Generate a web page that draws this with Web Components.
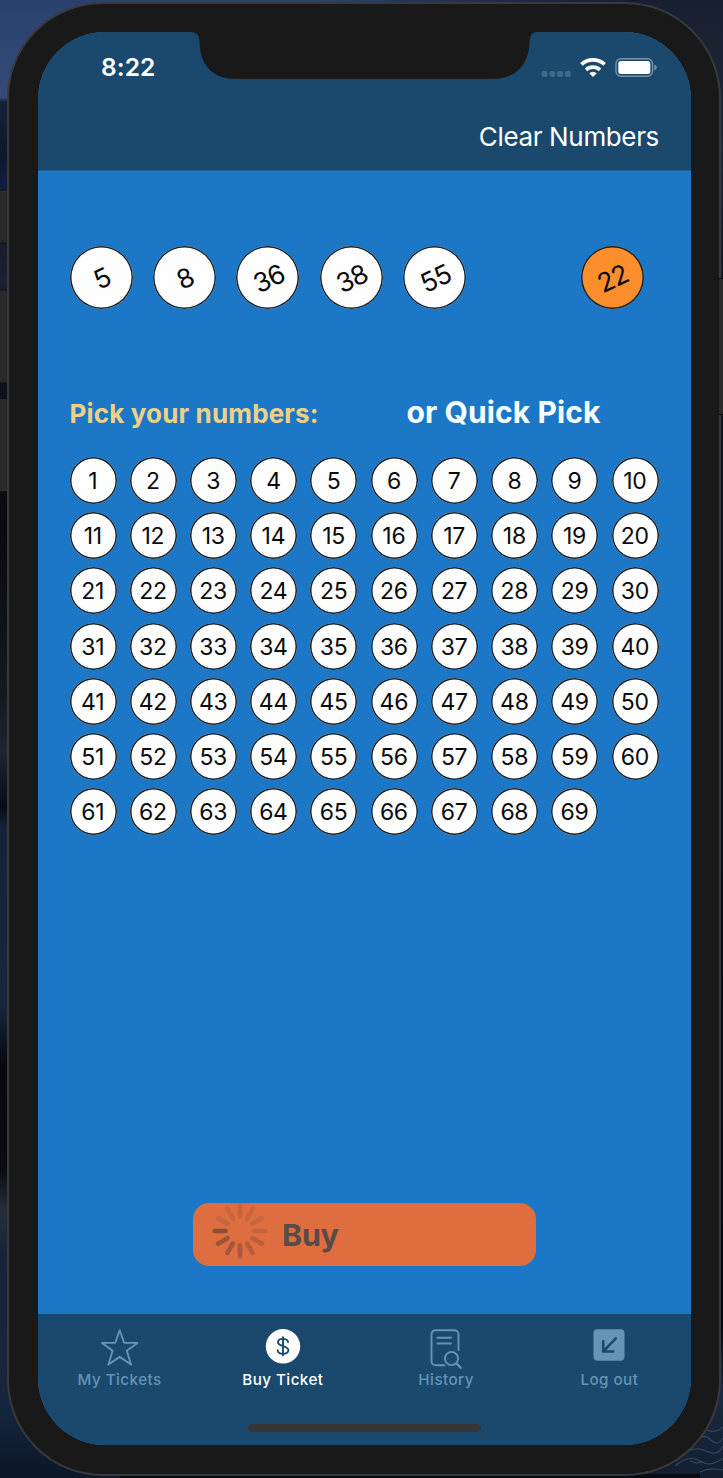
<!DOCTYPE html>
<html lang="en">
<head>
<meta charset="utf-8">
<title>Buy Ticket</title>
<style>
html, body { margin: 0; padding: 0; height: 1478px; overflow: hidden; background: #0b101c; }
body { font-family: Inter, "Liberation Sans", sans-serif; color: #fff; }
</style>
</head>
<body>
<phone-frame>
  <status-header slot="top" time="8:22">Clear Numbers</status-header>
  <ticket-picker slot="main"></ticket-picker>
  <tab-bar slot="bottom">
    <tab-item icon="star">My Tickets</tab-item>
    <tab-item icon="dollar" active>Buy Ticket</tab-item>
    <tab-item icon="history">History</tab-item>
    <tab-item icon="logout">Log out</tab-item>
  </tab-bar>
</phone-frame>
<script>
class BaseElement extends HTMLElement {
  connectedCallback() {
    if (this.shadowRoot) return;
    this.attachShadow({ mode: 'open' }).innerHTML = this.render();
  }
}

customElements.define('phone-frame', class extends BaseElement {
  render() {
    return `
<style>
:host { display: grid; box-sizing: border-box; width: 723px; height: 1478px; padding: 2px 2px 2px 7px; position: relative; overflow: hidden; }
.wall { position: absolute; inset: 0; width: 723px; height: 1478px; }
.case { position: relative; box-sizing: border-box; width: 714px; height: 1474px; border: 2px solid #38393d; border-radius: 96px; background: #191919; padding: 28px 28px 29px 29px; }
.screen { display: grid; grid-template-rows: 139px 1fr 131px; width: 653px; height: 1413px; background: #1c78c6; border-radius: 67px; overflow: hidden; position: relative; }
.notch { position: absolute; left: 153px; top: 0; }
.home { position: absolute; left: 210px; bottom: 13px; width: 233px; height: 8px; border-radius: 4px; background: #363636; }
</style>
<svg class="wall" viewBox="0 0 723 1478" preserveAspectRatio="none">
  <defs>
    <linearGradient id="l" x2="0" y2="1">
      <stop offset="0" stop-color="#2b416d"/><stop offset=".066" stop-color="#344a7a"/><stop offset=".069" stop-color="#17213a"/>
      <stop offset=".1" stop-color="#10182a"/><stop offset=".125" stop-color="#0d1f40"/><stop offset=".16" stop-color="#171a29"/>
      <stop offset=".19" stop-color="#1d2135"/><stop offset=".23" stop-color="#10131d"/><stop offset=".36" stop-color="#090a10"/>
      <stop offset=".47" stop-color="#151a20"/><stop offset=".51" stop-color="#20242e"/><stop offset=".545" stop-color="#0a0c15"/>
      <stop offset=".56" stop-color="#12243b"/><stop offset=".68" stop-color="#14273f"/><stop offset=".72" stop-color="#08090d"/>
      <stop offset=".79" stop-color="#090b10"/><stop offset=".82" stop-color="#292e38"/><stop offset=".85" stop-color="#13243b"/>
      <stop offset=".95" stop-color="#15263e"/><stop offset="1" stop-color="#0c1728"/>
    </linearGradient>
    <linearGradient id="r" x2="0" y2="1">
      <stop offset="0" stop-color="#181f30"/><stop offset=".1" stop-color="#202a39"/><stop offset=".2" stop-color="#14161f"/><stop offset=".5" stop-color="#0c0e14"/>
      <stop offset=".9" stop-color="#080a10"/><stop offset=".94" stop-color="#1b2a41"/><stop offset="1" stop-color="#131e31"/>
    </linearGradient>
    <linearGradient id="t"><stop offset="0" stop-color="#2b416d"/><stop offset=".4" stop-color="#2b416d"/><stop offset="1" stop-color="#181f30"/></linearGradient>
  </defs>
  <path fill="url(#l)" d="M0 0h361v1478H0z"/>
  <path fill="url(#r)" d="M361 0h362v1478H361z"/>
  <path fill="url(#t)" d="M100 0h523v20H100z"/>
  <path fill="#0a0b10" d="M120 1474h580v4H120z"/>
  <path fill="none" stroke="#314663" stroke-width="1.2" d="M682 1455q12-10 24-4t17-5M675 1466q14-12 25-5t23-3M696 1440q8-7 15 0t12-2M700 1472q10-5 23-2M707 1430q8 4 16-3M690 1461q6 3 13 1"/>
  <g fill="#2a2a2b" stroke="#101011">
    <rect x="-3" y="190" width="14" height="53" rx="2"/>
    <rect x="-3" y="290" width="14" height="93" rx="2"/>
    <rect x="-3" y="398.500" width="14" height="93" rx="2"/>
  </g>
</svg>
<div class="case">
  <div class="screen">
    <slot name="top"></slot><slot name="main"></slot><slot name="bottom"></slot>
    <svg class="notch" width="346" height="48" viewBox="153 0 346 48"><path fill="#191919" d="M153-1v1q8 0 8.500 9C161.500 32 174 47 197 47H455C478 47 491.500 32 491.500 9Q492 0 499 0v-1z"/></svg>
    <div class="home"></div>
  </div>
</div>
<svg class="wall" viewBox="0 0 723 1478"><rect x="718" y="278.500" width="14" height="136" rx="2" fill="#2a2a2b" stroke="#101011"/></svg>`;
  }
});

customElements.define('status-header', class extends BaseElement {
  render() {
    return `
<style>
:host { display: flex; flex-direction: column; box-sizing: border-box; background: #1a496d; border-bottom: 1px solid #245f8d; }
.status { display: flex; justify-content: space-between; height: 72px; padding: 0 34px 0 63px; }
time { font-size: 24.5px; line-height: 71px; font-weight: 600; letter-spacing: .1px; }
.action { font-size: 26px; line-height: 65px; text-align: right; padding-right: 32px; letter-spacing: -.35px; }
svg { display: block; }
</style>
<div class="status"><time>${this.getAttribute('time')}</time>
<svg width="116" height="72" viewBox="541 32 116 72">
  <g fill="#3e6a8a"><rect x="541.500" y="71" width="6" height="6" rx="2"/><rect x="549.300" y="71" width="6" height="6" rx="2"/><rect x="557" y="71" width="6" height="6" rx="2"/><rect x="564.800" y="71" width="6" height="6" rx="2"/></g>
  <g fill="none" stroke="#fff" stroke-width="3.700"><path d="M581.400 64.400a17 17 0 0 1 23.200 0"/><path d="M586 69.800a10.500 10.500 0 0 1 14 0"/></g>
  <path fill="#fff" d="M589.300 73.200q3.700-3 7.400 0l-3.700 3.700z"/>
  <rect x="616" y="58.700" width="36.500" height="17.600" rx="5" fill="none" stroke="#7695aa" stroke-width="1.400"/>
  <rect x="618.300" y="61" width="32" height="13" rx="2.800" fill="#fff"/>
  <path fill="#7695aa" d="M654.300 64.500q2.500 1 2.500 3t-2.500 3z"/>
</svg></div>
<div class="action"><slot></slot></div>`;
  }
});

customElements.define('lotto-ball', class extends BaseElement {
  render() {
    return `
<style>
:host { display: grid; place-items: center; width: 47px; height: 47px; box-shadow: inset 0 0 0 1.5px #15232f; border-radius: 50%; background: #fefefe; color: #0b0b0b; font-size: 23px; line-height: 28px; letter-spacing: -.3px; }
:host([drawn]) { width: 63px; height: 63px; font-size: 26.5px; letter-spacing: -.8px; }
:host([power]) { background: #fc8f2c; }
span { position: relative; top: .5px; left: -.3px; }
:host([drawn]) span { transform: rotate(-25deg); left: .5px; }
</style><span><slot></slot></span>`;
  }
});

customElements.define('buy-button', class extends BaseElement {
  render() {
    const alphas = [.12, .12, .12, .15, .2, .25, .3, .34, .4, .5, .14, .12];
    const spokes = alphas.map((a, i) => `<path d="M0-14.500V-25.300" opacity="${a}" transform="rotate(${i * 30})"/>`).join('');
    return `
<style>
:host { display: flex; box-sizing: border-box; width: 343px; height: 63px; padding-left: 18.500px; border-radius: 16px; background: #de6d40; color: #574c46; }
b { font-size: 30.5px; font-weight: 700; line-height: 64px; margin-left: 14.500px; letter-spacing: -.3px; }
</style>
<svg width="56" height="56" viewBox="-28 -28 56 56"><g stroke="#35302d" stroke-width="4.600" stroke-linecap="round">${spokes}</g></svg><b><slot></slot></b>`;
  }
});

customElements.define('ticket-picker', class extends BaseElement {
  render() {
    const grid = Array.from({ length: 69 }, (_, i) => `<lotto-ball>${i + 1}</lotto-ball>`).join('');
    const drawn = [5, 8, 36, 38, 55].map(n => `<lotto-ball drawn>${n}</lotto-ball>`).join('');
    return `
<style>
:host { display: flex; flex-direction: column; box-sizing: border-box; padding: 75px 31.500px 48px 31.500px; }
.drawn { display: flex; gap: 20.400px; padding-right: 16px; }
.drawn :last-child { margin-left: auto; }
.heads { display: flex; align-items: baseline; margin-top: 81px; height: 44px; line-height: 44px; white-space: nowrap; }
.pick { width: 337px; color: #f0d087; font-size: 26px; font-weight: 650; letter-spacing: .16px; }
.quick { font-size: 30px; font-weight: 700; color: #f8ffff; letter-spacing: .1px; }
.grid { display: grid; grid-template-columns: repeat(10, 47px); column-gap: 13.240px; row-gap: 8.200px; margin-top: 23px; }
buy-button { margin: auto auto 0 123.500px; }
</style>
<div class="drawn">${drawn}<lotto-ball drawn power>22</lotto-ball></div>
<div class="heads"><span class="pick">Pick your numbers:</span><span class="quick">or Quick Pick</span></div>
<div class="grid">${grid}</div>
<buy-button>Buy</buy-button>`;
  }
});

customElements.define('tab-bar', class extends BaseElement {
  render() {
    return `
<style>
:host { display: grid; grid-template-columns: repeat(4, 1fr); background: #1a496d; }
</style><slot></slot>`;
  }
});

const ICONS = {
  star: '<path fill="none" stroke="currentColor" stroke-width="1.900" stroke-linejoin="round" d="M19.700 2.300 24.200 14.700 37.400 14.900 26.800 22.800 31 36.500 19.700 28.900 8.400 36.500 12.600 22.800 2 14.900 15.300 14.700z"/>',
  dollar: '<circle cx="20" cy="18.300" r="17.200" fill="#fff"/><g transform="translate(0 .3)" fill="none" stroke="#1a496d" stroke-width="1.900" stroke-linecap="round" stroke-linejoin="round"><path d="M20 8.800V27.200M25 13.800C24.400 9.600 15 9.400 15 14 15 18.800 25.400 16.800 25.400 22 25.400 26.800 15 26.600 14.700 21.900"/></g>',
  history: '<g transform="translate(-.5 .5)" fill="none" stroke="currentColor" stroke-width="1.900" stroke-linecap="round"><path d="M19 36.700H10a4 4 0 0 1-4-4V5.700a4 4 0 0 1 4-4H29a4 4 0 0 1 4 4V21.500M12 9.300H25.500M12 15H25.500"/><circle cx="26" cy="30" r="6.600"/><path stroke-width="2.300" d="m31 35 4.200 4.200"/></g>',
  logout: '<g transform="translate(0 .5)"><rect x="4.500" y=".800" width="31" height="31.500" rx="4" fill="currentColor"/><path fill="none" stroke="#1a496d" stroke-width="2.500" stroke-linecap="round" stroke-linejoin="round" d="M26.800 9.800 14.800 22.300M14.200 12.800V23H24.200"/></g>'
};

customElements.define('tab-item', class extends BaseElement {
  render() {
    return `
<style>
:host { display: flex; flex-direction: column; align-items: center; padding-top: 14px; color: #6594b5; font-size: 15.200px; font-weight: 500; line-height: 20px; letter-spacing: .45px; }
:host([active]) { color: #fff; }
svg { display: block; overflow: visible; margin-bottom: 2px; }
</style>
<svg width="40" height="40" viewBox="0 0 40 40">${ICONS[this.getAttribute('icon')]}</svg><span><slot></slot></span>`;
  }
});
</script>
</body>
</html>
